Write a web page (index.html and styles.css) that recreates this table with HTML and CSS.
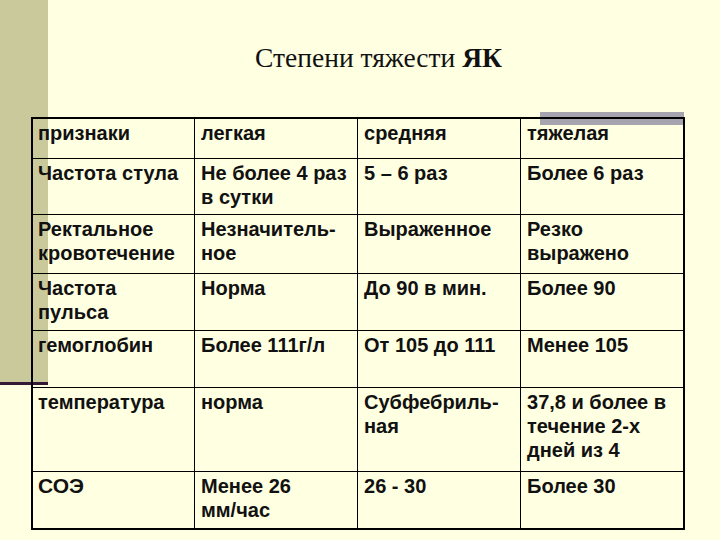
FILE: index.html
```html
<!DOCTYPE html>
<html lang="ru">
<head>
<meta charset="utf-8">
<title>Степени тяжести ЯК</title>
<link rel="stylesheet" href="styles.css">
</head>
<body>
<div class="slide">
  <h1 class="title">Степени тяжести <b>ЯК</b></h1>
  <div class="table-wrap">
    <table class="grid">
      <tr class="r40">
        <td>признаки</td><td>легкая</td><td>средняя</td><td>тяжелая</td>
      </tr>
      <tr class="r56">
        <td>Частота стула</td><td>Не более 4 раз в сутки</td><td>5 – 6 раз</td><td>Более 6 раз</td>
      </tr>
      <tr class="r59">
        <td>Ректальное кровотечение</td><td>Незначитель-<br>ное</td><td>Выраженное</td><td>Резко выражено</td>
      </tr>
      <tr class="r57">
        <td>Частота пульса</td><td>Норма</td><td>До 90 в мин.</td><td>Более 90</td>
      </tr>
      <tr class="r57">
        <td>гемоглобин</td><td>Более 111г/л</td><td>От 105 до 111</td><td>Менее 105</td>
      </tr>
      <tr class="r84">
        <td>температура</td><td>норма</td><td>Субфебриль-<br>ная</td><td>37,8 и более в течение 2-х дней из 4</td>
      </tr>
      <tr class="r58">
        <td class="big">СОЭ</td><td>Менее 26 <span class="nowrap">мм/час</span></td><td>26 - 30</td><td>Более 30</td>
      </tr>
    </table>
  </div>
</div>
</body>
</html>
```
FILE: styles.css
```css
html, body {
  margin: 0;
  padding: 0;
}
body {
  width: 720px;
  height: 540px;
  overflow: hidden;
  background-color: #ffffe2;
  background-image:
    linear-gradient(#341a34, #341a34),
    linear-gradient(#c9c99b, #c9c99b);
  background-repeat: no-repeat;
  background-size: 48px 3px, 48px 383px;
  background-position: 0 382px, 0 0;
}
.slide {
  display: flex;
  flex-direction: column;
}
.title {
  margin: 0;
  padding: 42px 0 0 37px;
  height: 32px;
  font-family: "Liberation Serif", "Times New Roman", serif;
  font-size: 27.5px;
  line-height: 32px;
  font-weight: normal;
  text-align: center;
  color: #111;
}
.title b {
  font-weight: bold;
}
.table-wrap {
  position: relative;
  margin: 43px 0 0 31px;
  width: 654px;
}
.table-wrap::before {
  content: "";
  position: absolute;
  left: 509px;
  top: -5px;
  width: 144px;
  height: 13px;
  background: #a6a4ae;
}
.grid {
  position: relative;
  width: 654px;
  table-layout: fixed;
  border-collapse: collapse;
  border: 2px solid #000;
  font-family: "Liberation Sans", Arial, sans-serif;
  font-weight: bold;
  font-size: 20px;
  line-height: 24px;
  color: #111;
}
.grid td {
  border: 1px solid #000;
  padding: 2px 6px 0 6px;
  vertical-align: top;
  width: 25%;
}
.grid td:first-child {
  padding-left: 5px;
}
.grid td.big {
  font-size: 21px;
}
.nowrap {
  white-space: nowrap;
}
.r40 { height: 40px; }
.r56 { height: 56px; }
.r57 { height: 57px; }
.r58 { height: 58px; }
.r59 { height: 59px; }
.r84 { height: 84px; }
```
